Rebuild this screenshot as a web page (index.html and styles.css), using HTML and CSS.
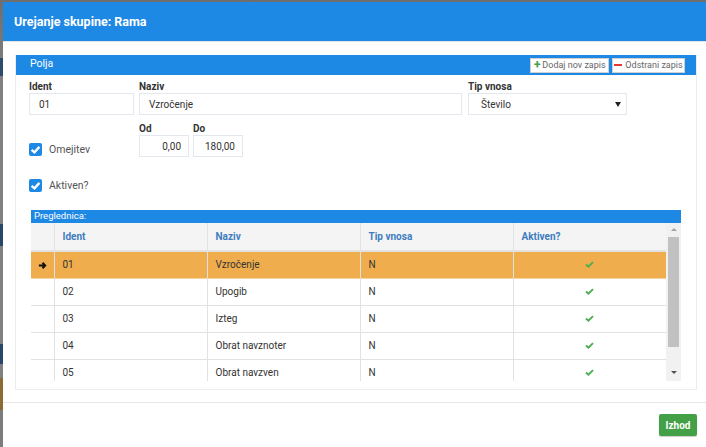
FILE: index.html
```html
<!DOCTYPE html>
<html lang="sl">
<head>
    <meta charset="UTF-8">
    <meta name="viewport" content="width=device-width, initial-scale=1.0">
    <title>Urejanje skupine: Rama</title>
    <link rel="stylesheet" href="styles.css">
</head>
<body>
    <div class="modal">
        <div class="modal-header">
            <h1>Urejanje skupine: Rama</h1>
        </div>

        <div class="modal-body">
            <div class="panel">
                <div class="panel-heading">
                    <span>Polja</span>
                    <div class="tools">
                        <button class="tool-btn btn-add"><span class="ico plus">+</span>Dodaj nov zapis</button>
                        <button class="tool-btn btn-del"><span class="ico minus"></span>Odstrani zapis</button>
                    </div>
                </div>

                <div class="panel-content">
                    <div class="form-row">
                        <div class="field f-ident">
                            <label>Ident</label>
                            <div class="input">01</div>
                        </div>
                        <div class="field f-naziv">
                            <label>Naziv</label>
                            <div class="input">Vzročenje</div>
                        </div>
                        <div class="field f-tip">
                            <label>Tip vnosa</label>
                            <div class="input select">Število<span class="caret"></span></div>
                        </div>
                    </div>

                    <div class="form-row range-row">
                        <div class="check-wrap">
                            <span class="checkbox"><svg viewBox="0 0 10 10"><path d="M2 5.2 L4.2 7.2 L8 3" /></svg></span>
                            <span class="check-label">Omejitev</span>
                        </div>
                        <div class="field f-num">
                            <label>Od</label>
                            <div class="input num">0,00</div>
                        </div>
                        <div class="field f-num">
                            <label>Do</label>
                            <div class="input num">180,00</div>
                        </div>
                    </div>

                    <div class="check-wrap active-row">
                        <span class="checkbox"><svg viewBox="0 0 10 10"><path d="M2 5.2 L4.2 7.2 L8 3" /></svg></span>
                        <span class="check-label">Aktiven?</span>
                    </div>

                    <div class="grid">
                        <div class="grid-caption">Preglednica:</div>
                        <div class="grid-body">
                            <div class="grid-scroll">
                                <table>
                                    <colgroup>
                                        <col class="c-ind">
                                        <col><col><col><col>
                                    </colgroup>
                                    <thead>
                                        <tr>
                                            <th></th>
                                            <th>Ident</th>
                                            <th>Naziv</th>
                                            <th>Tip vnosa</th>
                                            <th>Aktiven?</th>
                                        </tr>
                                    </thead>
                                    <tbody>
                                        <tr class="selected">
                                            <td class="ind"><svg viewBox="0 0 10 10" class="arrow"><path d="M1 5 H8 M5 2 L8 5 L5 8" /></svg></td>
                                            <td>01</td><td>Vzročenje</td><td>N</td>
                                            <td class="ok"><svg viewBox="0 0 10 8"><path d="M1 4 L3.8 6.5 L9 1.2" /></svg></td>
                                        </tr>
                                        <tr>
                                            <td class="ind"></td>
                                            <td>02</td><td>Upogib</td><td>N</td>
                                            <td class="ok"><svg viewBox="0 0 10 8"><path d="M1 4 L3.8 6.5 L9 1.2" /></svg></td>
                                        </tr>
                                        <tr>
                                            <td class="ind"></td>
                                            <td>03</td><td>Izteg</td><td>N</td>
                                            <td class="ok"><svg viewBox="0 0 10 8"><path d="M1 4 L3.8 6.5 L9 1.2" /></svg></td>
                                        </tr>
                                        <tr>
                                            <td class="ind"></td>
                                            <td>04</td><td>Obrat navznoter</td><td>N</td>
                                            <td class="ok"><svg viewBox="0 0 10 8"><path d="M1 4 L3.8 6.5 L9 1.2" /></svg></td>
                                        </tr>
                                        <tr>
                                            <td class="ind"></td>
                                            <td>05</td><td>Obrat navzven</td><td>N</td>
                                            <td class="ok"><svg viewBox="0 0 10 8"><path d="M1 4 L3.8 6.5 L9 1.2" /></svg></td>
                                        </tr>
                                    </tbody>
                                </table>
                            </div>
                            <div class="scrollbar">
                                <span class="sb-arrow up"></span>
                                <span class="sb-thumb"></span>
                                <span class="sb-arrow down"></span>
                            </div>
                        </div>
                    </div>
                </div>
            </div>
        </div>

        <div class="modal-footer">
            <button class="btn-exit">Izhod</button>
        </div>
    </div>
</body>
</html>
```

FILE: styles.css
```css
* {
    box-sizing: border-box;
}
body {
    margin: 0;
    height: 447px;
    overflow: hidden;
    font-family: Roboto, "Liberation Sans", sans-serif;
    color: #333;
    background: linear-gradient(to bottom,
        #6e6e6e 0, #7c7c7c 58px, #2d4b6d 58px, #2d4b6d 76px,
        #808080 76px, #808080 224px, #27466a 224px, #27466a 246px,
        #808080 246px, #808080 344px, #27466a 344px, #27466a 364px,
        #808080 364px, #808080 378px, #8b6a33 378px, #8b6a33 410px,
        #7c7c7c 410px);
}
.modal {
    margin: 2px 0 0 3px;
    height: 445px;
    background: white;
}
.modal-header {
    height: 40px;
    padding-left: 11px;
    display: flex;
    align-items: center;
    background: #1e88e5;
    border-bottom: 1px solid #e3e3e3;
}
.modal-header h1 {
    margin: 0;
    font-size: 12.5px;
    font-weight: bold;
    color: white;
}
.modal-body {
    padding: 13px 9px 12px 12px;
    border-bottom: 1px solid #e6e6e6;
}
.panel {
    height: 335px;
    border: 1px solid #ececec;
    border-top: none;
}
.panel-heading {
    height: 20px;
    padding: 0 11px 0 14px;
    display: flex;
    align-items: center;
    justify-content: space-between;
    background: #1e88e5;
    color: white;
    font-size: 10.5px;
}
.panel-heading > span {
    margin-top: -4px;
}
.tools {
    display: flex;
    gap: 3px;
}
.tool-btn {
    height: 15px;
    padding: 0;
    display: flex;
    align-items: center;
    justify-content: center;
    gap: 1px;
    border: 1px solid #d0d0d0;
    background: white;
    color: #666;
    font-family: Roboto, "Liberation Sans", sans-serif;
    font-size: 9px;
}
.btn-add { width: 79px; }
.btn-del { width: 73px; }
.ico {
    display: inline-block;
    width: 8px;
    text-align: center;
}
.plus {
    color: #43a047;
    font-weight: bold;
    font-size: 12px;
    line-height: 8px;
}
.minus {
    height: 2px;
    background: #e53935;
    margin-right: 2px;
}
.panel-content {
    padding: 6px 0 0 13px;
}
.form-row {
    display: flex;
}
.field label {
    display: block;
    height: 12px;
    line-height: 12px;
    font-size: 10px;
    font-weight: bold;
    color: #333;
}
.input {
    height: 22px;
    padding-left: 9px;
    display: flex;
    align-items: center;
    border: 1px solid #e3e8ee;
    font-size: 10px;
    color: #333;
}
.f-ident { width: 105px; margin-right: 5px; }
.f-naziv { width: 323px; margin-right: 6px; }
.f-tip { width: 159px; }
.select {
    padding-left: 12px;
    justify-content: space-between;
    padding-right: 5px;
}
.caret {
    width: 0;
    height: 0;
    border-left: 3px solid transparent;
    border-right: 3px solid transparent;
    border-top: 5px solid #222;
}
.range-row {
    margin-top: 8px;
    align-items: flex-end;
}
.f-num {
    width: 50px;
    margin-right: 4px;
}
.num {
    justify-content: flex-end;
    padding-right: 7px;
}
.check-wrap {
    width: 110px;
    display: flex;
    align-items: center;
    gap: 7px;
    margin-bottom: 1px;
}
.checkbox {
    width: 13px;
    height: 13px;
    border-radius: 2px;
    background: #1e88e5;
    display: flex;
}
.checkbox svg {
    width: 13px;
    height: 13px;
    fill: none;
    stroke: white;
    stroke-width: 1.8;
}
.check-label {
    font-size: 10.5px;
    color: #555;
}
.active-row {
    margin-top: 22px;
}
.grid {
    margin: 18px 0 0 2px;
    width: 650px;
}
.grid-caption {
    height: 13px;
    line-height: 12px;
    padding-left: 3px;
    background: #1e88e5;
    color: white;
    font-size: 9.5px;
}
.grid-body {
    display: flex;
    height: 158px;
}
.grid-scroll {
    flex: 1;
    overflow: hidden;
}
table {
    width: 100%;
    border-collapse: collapse;
    table-layout: fixed;
    font-size: 10px;
}
.c-ind {
    width: 23px;
}
th {
    height: 28px;
    padding-left: 8px;
    text-align: left;
    background: #f4f4f4;
    color: #3d7cbf;
    font-weight: bold;
    border-left: 1px solid #e2e2e2;
    border-bottom: 2px solid #e2e2e2;
}
td {
    height: 27px;
    padding-left: 8px;
    border-left: 1px solid #e2e2e2;
    border-bottom: 1px solid #e2e2e2;
    color: #333;
}
th:first-child, td:first-child {
    border-left: none;
}
tr.selected td {
    background: #efad4e;
    border-bottom-color: #f6d4a4;
}
td.ind {
    padding: 0;
    text-align: center;
}
.arrow {
    width: 9px;
    height: 9px;
    margin-top: 3px;
    fill: none;
    stroke: #111;
    stroke-width: 2.2;
}
td.ok {
    padding: 0;
    text-align: center;
}
td.ok svg {
    width: 9px;
    height: 7px;
    fill: none;
    stroke: #4caf50;
    stroke-width: 2.2;
}
.scrollbar {
    width: 15px;
    background: #f1f1f1;
    display: flex;
    flex-direction: column;
    align-items: center;
}
.sb-arrow {
    width: 0;
    height: 0;
    border-left: 3px solid transparent;
    border-right: 3px solid transparent;
}
.sb-arrow.up {
    margin-top: 5px;
    border-bottom: 3px solid #a3a3a3;
}
.sb-arrow.down {
    margin-top: 24px;
    border-top: 3px solid #505050;
}
.sb-thumb {
    width: 11px;
    height: 110px;
    margin-top: 6px;
    background: #c1c1c1;
}
.modal-footer {
    display: flex;
    justify-content: flex-end;
    padding: 11px 9px 0 0;
}
.btn-exit {
    width: 38px;
    height: 22px;
    padding: 0;
    border: none;
    border-radius: 2px;
    background: #43a047;
    color: white;
    font-family: Roboto, "Liberation Sans", sans-serif;
    font-size: 10px;
    font-weight: bold;
    box-shadow: 0 1px 1px rgba(0,0,0,0.2);
}
```
